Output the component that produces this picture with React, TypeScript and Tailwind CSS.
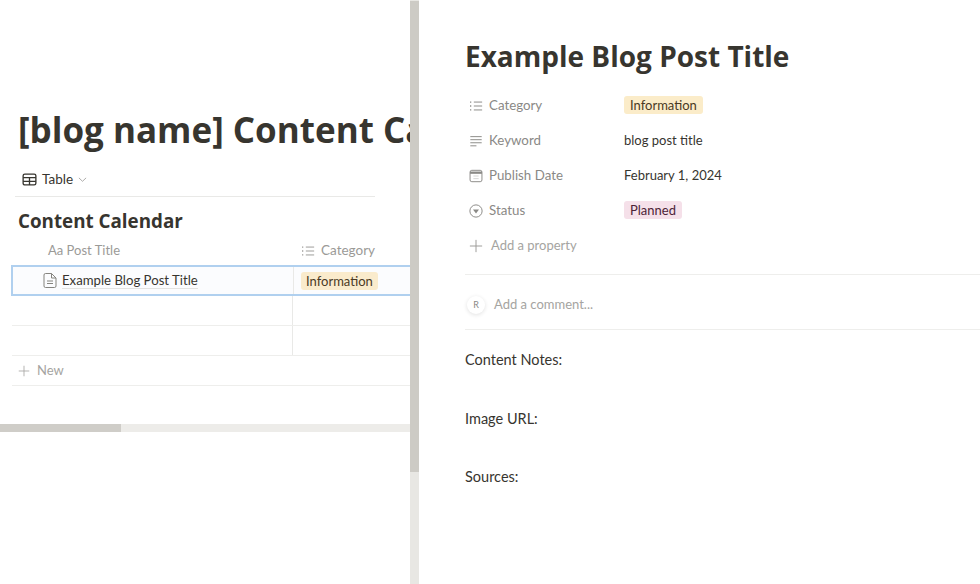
import React from "react";

const font = { fontFamily: 'Lato, "Open Sans", sans-serif' };
const heading = { fontFamily: '"Open Sans", "Noto Sans", sans-serif' };

function ListIcon({ className = "" }: { className?: string }) {
  return (
    <svg viewBox="0 0 16 16" className={className} fill="none" stroke="currentColor" strokeWidth="1.1">
      <path d="M5.5 3.5H15M5.5 8H15M5.5 12.5H15" />
      <path d="M1.2 3.5h1.4M1.2 8h1.4M1.2 12.5h1.4" strokeWidth="1.5" />
    </svg>
  );
}
function TextIcon({ className = "" }: { className?: string }) {
  return (
    <svg viewBox="0 0 16 16" className={className} fill="none" stroke="currentColor" strokeWidth="1.1">
      <path d="M1.5 3H14.5M1.5 6.5H14.5M1.5 10H14.5M1.5 13.5H8.5" />
    </svg>
  );
}
function CalIcon({ className = "" }: { className?: string }) {
  return (
    <svg viewBox="0 0 16 16" className={className} fill="none" stroke="currentColor">
      <rect x="1.2" y="1.5" width="13.6" height="13" rx="2" strokeWidth="1.1" />
      <path d="M1.2 4.2H14.8" strokeWidth="2.6" />
      <path d="M5 8h6M5 11h6" strokeWidth="0.8" opacity="0.5" />
    </svg>
  );
}
function StatusIcon({ className = "" }: { className?: string }) {
  return (
    <svg viewBox="0 0 16 16" className={className} fill="none" stroke="currentColor" strokeWidth="1.1">
      <circle cx="8" cy="8" r="7" />
      <path d="M4.6 6.2h6.8L8 10.8z" fill="currentColor" stroke="none" />
    </svg>
  );
}
function PlusIcon({ className = "" }: { className?: string }) {
  return (
    <svg viewBox="0 0 16 16" className={className} fill="none" stroke="currentColor" strokeWidth="1.1">
      <path d="M8 1V15M1 8H15" />
    </svg>
  );
}
function TableIcon({ className = "" }: { className?: string }) {
  return (
    <svg viewBox="0 0 16 16" className={className} fill="none" stroke="currentColor" strokeWidth="1.4">
      <rect x="1.2" y="2.2" width="13.6" height="11.6" rx="1.8" />
      <path d="M1.2 6H14.8M1.2 10H14.8M8 6V13.8" />
    </svg>
  );
}
function PageIcon({ className = "" }: { className?: string }) {
  return (
    <svg viewBox="0 0 16 16" className={className} fill="none" stroke="currentColor" strokeWidth="1">
      <path d="M2 2.5A1.5 1.5 0 0 1 3.5 1H9.5L14 5.5V13.5A1.5 1.5 0 0 1 12.5 15H3.5A1.5 1.5 0 0 1 2 13.5Z" />
      <path d="M9.5 1V5.5H14M5 8.5H11M5 11H11" />
    </svg>
  );
}

function Prop({ icon, label, children }: { icon: React.ReactNode; label: string; children: React.ReactNode }) {
  return (
    <div className="flex h-[35px] items-center">
      <div className="flex w-[159px] items-center text-[13.3px] text-[#8a8986]">
        <span className="ml-[4px] mr-[6px] flex w-[14px] justify-center">{icon}</span>
        {label}
      </div>
      <div className="text-[13px] text-[#37352f]">{children}</div>
    </div>
  );
}

export default function App() {
  return (
    <div className="flex h-[584px] w-[980px] overflow-hidden bg-white" style={font}>
      <div className="h-full w-[410px] shrink-0 overflow-hidden">
        <h1 style={heading} className="mt-[107px] ml-[18px] h-[46px] whitespace-nowrap text-[35px] font-bold leading-[46px] text-[#37352f]">
          [blog name] Content Calendar
        </h1>
        <div className="ml-[15px] mt-[10px] flex h-[34px] w-[360px] items-center border-b border-[#e9e9e7] pl-[7px] text-[13.5px] text-[#37352f]">
          <TableIcon className="h-[15px] w-[15px]" />
          <span className="ml-[5px]">Table</span>
          <svg viewBox="0 0 10 10" className="ml-[5px] h-[9px] w-[9px] text-[#a5a4a1]" fill="none" stroke="currentColor" strokeWidth="1">
            <path d="M1 3.2L5 7L9 3.2" />
          </svg>
        </div>
        <div style={heading} className="ml-[18px] mt-[10px] h-[28px] text-[18.8px] font-bold leading-[28px] text-[#37352f]">Content Calendar</div>
        <div className="ml-[12px] mt-[1px] flex h-[29px] items-center text-[13px] text-[#9b9a97]">
          <div className="w-[281px] pl-[36px]">Aa Post Title</div>
          <div className="flex items-center pl-[8px]">
            <ListIcon className="mr-[6px] h-[14px] w-[14px]" />
            <span className="text-[13.5px]">Category</span>
          </div>
        </div>
        <div className="ml-[11px] flex h-[31px] items-center border-y-2 border-l-2 border-[#b0d0ef] bg-[#fbfcfe]">
          <div className="flex h-full w-[281px] items-center border-r border-[#e9e9e7] pl-[29px]">
            <PageIcon className="h-[17px] w-[16px] text-[#85847f]" />
            <span className="ml-[4px] border-b border-[#e3e3e1] text-[13.2px] leading-[16px] text-[#37352f]">Example Blog Post Title</span>
          </div>
          <span className="ml-[7px] rounded-[3px] bg-[#faebcc] px-[5px] text-[13px] leading-[18px] text-[#4a3a24]">Information</span>
        </div>
        {[0, 1].map((i) => (
          <div key={i} className="ml-[12px] flex h-[30px] border-b border-[#eeeeec]">
            <div className="w-[281px] border-r border-[#e9e9e7]" />
          </div>
        ))}
        <div className="ml-[12px] flex h-[30px] items-center border-b border-[#eeeeec] pl-[6px] pt-[1px] text-[13px] text-[#a5a4a1]">
          <PlusIcon className="h-[12px] w-[12px]" />
          <span className="ml-[7px]">New</span>
        </div>
        <div className="mt-[38px] h-[8px] w-full bg-[#edece9]">
          <div className="h-full w-[121px] bg-[#cfcdc8]" />
        </div>
      </div>
      <div className="flex h-full w-[9px] shrink-0 flex-col">
        <div className="h-[1px] bg-[#e8e7e3]" />
        <div className="flex-1 bg-[#cdcbc5]" />
        <div className="h-[112px] bg-[#e8e7e3]" />
      </div>
      <div className="min-w-0 flex-1 pl-[46px]">
        <h2 style={heading} className="mt-[36px] h-[40px] whitespace-nowrap text-[28px] font-bold leading-[40px] text-[#37352f]">Example Blog Post Title</h2>
        <div className="mt-[12px]">
          <Prop icon={<ListIcon className="h-[14px] w-[14px]" />} label="Category">
            <span className="rounded-[3px] bg-[#fbecc9] px-[6px] py-[1px] text-[#4a3a24]">Information</span>
          </Prop>
          <Prop icon={<TextIcon className="h-[14px] w-[14px]" />} label="Keyword">blog post title</Prop>
          <Prop icon={<CalIcon className="h-[14px] w-[14px]" />} label="Publish Date">February 1, 2024</Prop>
          <Prop icon={<StatusIcon className="h-[14px] w-[14px]" />} label="Status">
            <span className="rounded-[3px] bg-[#f5e0e9] px-[6px] py-[1px] text-[#4c2337]">Planned</span>
          </Prop>
          <div className="flex h-[35px] items-center text-[13px] text-[#a5a4a1]">
            <PlusIcon className="ml-[4px] mr-[8px] h-[14px] w-[14px] text-[#9b9a97]" />
            Add a property
          </div>
        </div>
        <div className="mt-[11px] border-y border-[#eeeeec] pt-[20px] pb-[14px]">
          <div className="flex h-[20px] items-center">
            <span className="ml-[2px] flex h-[18px] w-[18px] items-center justify-center rounded-full bg-white text-[9px] text-[#8a8986] shadow-[0_1px_4px_rgba(0,0,0,0.12)]">R</span>
            <span className="ml-[9px] text-[13px] text-[#a5a4a1]">Add a comment...</span>
          </div>
        </div>
        <div className="text-[14.5px] text-[#37352f]">
          <div className="mt-[19px] h-[21px] leading-[21px]">Content Notes:</div>
          <div className="mt-[38px] h-[21px] leading-[21px]">Image URL:</div>
          <div className="mt-[37px] h-[21px] leading-[21px]">Sources:</div>
        </div>
      </div>
    </div>
  );
}
